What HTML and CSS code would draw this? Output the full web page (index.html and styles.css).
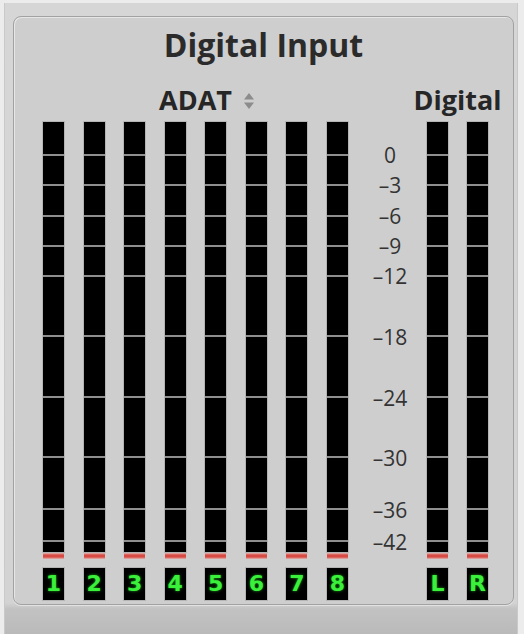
FILE: index.html
```html
<!DOCTYPE html>
<html>
<head>
<meta charset="utf-8">
<link rel="stylesheet" href="styles.css">
</head>
<body>
<div class="window">
  <div class="panel">
    <h1 class="title">Digital Input</h1>
    <div class="headers">
      <div class="hdr hdr-adat">
        <span class="popup">ADAT<svg class="updown" viewBox="0 0 12 18" width="12" height="18"><path d="M6 1 L11 7.5 H1 Z" fill="#8c8c8c"/><path d="M6 17 L11 10.5 H1 Z" fill="#8c8c8c"/></svg></span>
      </div>
      <div class="hdr-gap"></div>
      <div class="hdr hdr-digital">Digital</div>
    </div>
    <div class="bank">
      <div class="group group-adat">
        <div class="channel"><div class="meter"></div><div class="clip"></div><div class="num">1</div></div>
        <div class="channel"><div class="meter"></div><div class="clip"></div><div class="num">2</div></div>
        <div class="channel"><div class="meter"></div><div class="clip"></div><div class="num">3</div></div>
        <div class="channel"><div class="meter"></div><div class="clip"></div><div class="num">4</div></div>
        <div class="channel"><div class="meter"></div><div class="clip"></div><div class="num">5</div></div>
        <div class="channel"><div class="meter"></div><div class="clip"></div><div class="num">6</div></div>
        <div class="channel"><div class="meter"></div><div class="clip"></div><div class="num">7</div></div>
        <div class="channel"><div class="meter"></div><div class="clip"></div><div class="num">8</div></div>
      </div>
      <div class="scale">
        <span class="tick" style="top:33px">0</span>
        <span class="tick" style="top:63px">–3</span>
        <span class="tick" style="top:94px">–6</span>
        <span class="tick" style="top:124px">–9</span>
        <span class="tick" style="top:154px">–12</span>
        <span class="tick" style="top:215px">–18</span>
        <span class="tick" style="top:276px">–24</span>
        <span class="tick" style="top:336px">–30</span>
        <span class="tick" style="top:388px">–36</span>
        <span class="tick" style="top:420px">–42</span>
      </div>
      <div class="group group-digital">
        <div class="channel"><div class="meter"></div><div class="clip"></div><div class="num">L</div></div>
        <div class="channel"><div class="meter"></div><div class="clip"></div><div class="num">R</div></div>
      </div>
    </div>
  </div>
</div>
</body>
</html>
```
FILE: styles.css
```css
html, body {
  margin: 0;
  padding: 0;
}
body {
  width: 524px;
  height: 634px;
  background: #ececec;
  overflow: hidden;
  font-family: "Open Sans", "DejaVu Sans", sans-serif;
}
.window {
  margin: 3px 6px 0 4px;
  height: 631px;
  box-sizing: border-box;
  padding: 13px 5px 0 8px;
  background: linear-gradient(to bottom, #d6d6d6 0, #d3d3d3 600px, #c2c2c2 606px, #bababa 631px);
  border-left: 1px solid #c9c9c9;
  border-right: 1px solid #c9c9c9;
}
.panel {
  width: 501px;
  height: 589px;
  box-sizing: border-box;
  border: 1px solid #a2a2a2;
  border-radius: 8px;
  background: #cecece;
  box-shadow: inset 1px 1px 0 #e6e6e6, 0 1px 0 #e2e2e2;
  padding-left: 29px;
}
.title {
  margin: 8px 0 0 -29px;
  height: 40px;
  line-height: 40px;
  text-align: center;
  font-size: 32px;
  font-weight: 700;
  color: #2b2b2b;
}
.headers,
.bank {
  display: grid;
  grid-template-columns: 305px 79px 61px;
}
.headers {
  margin-top: 18px;
  height: 34px;
  align-items: center;
}
.hdr {
  display: flex;
  justify-content: center;
  white-space: nowrap;
  font-size: 27px;
  font-weight: 700;
  color: #262626;
  line-height: 34px;
}
.popup {
  display: inline-flex;
  align-items: center;
  padding-left: 23px;
}
.updown {
  margin-left: 11px;
  margin-top: 2px;
}
.bank {
  margin-top: 5px;
}
.group {
  display: flex;
  justify-content: space-between;
}
.channel {
  width: 21px;
  display: flex;
  flex-direction: column;
}
.meter {
  height: 430px;
  background: linear-gradient(to bottom,
    #000 0 32px, #8e8e8e 32px 34px,
    #000 34px 62px, #8e8e8e 62px 64px,
    #000 64px 93px, #8e8e8e 93px 95px,
    #000 95px 123px, #8e8e8e 123px 125px,
    #000 125px 153px, #8e8e8e 153px 155px,
    #000 155px 213px, #8e8e8e 213px 215px,
    #000 215px 274px, #8e8e8e 274px 276px,
    #000 276px 334px, #8e8e8e 334px 336px,
    #000 336px 386px, #8e8e8e 386px 388px,
    #000 388px 418px, #8e8e8e 418px 420px,
    #000 420px 430px);
  box-shadow: 0 0 0 1px #b4b4b4;
}
.clip {
  height: 6px;
  margin-top: 1px;
  background: linear-gradient(to bottom, #e2b7b5 0, #d84a44 2px, #d84a44 4px, #e2b7b5 6px);
}
.num {
  margin-top: 9px;
  height: 32px;
  background: #000;
  box-shadow: 0 0 0 1px #b4b4b4;
  color: #3af03a;
  font-family: "DejaVu Sans", sans-serif;
  font-weight: 700;
  font-size: 22px;
  line-height: 32px;
  text-align: center;
  text-shadow: 0 0 3px #1a9a1a;
}
.scale {
  position: relative;
  height: 430px;
}
.tick {
  position: absolute;
  left: 42px;
  transform: translate(-50%, -50%);
  font-size: 21px;
  line-height: 22px;
  color: #333333;
  white-space: nowrap;
}
```
